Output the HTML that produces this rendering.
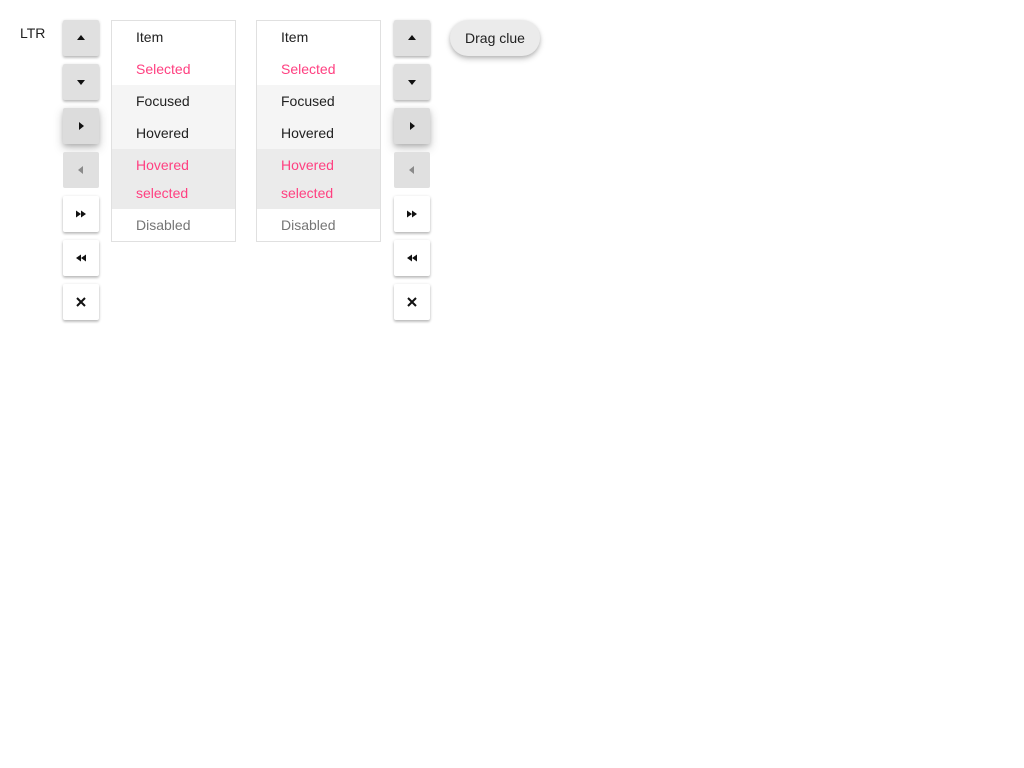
<!DOCTYPE html>
<html><head><meta charset="utf-8"><style>
body{margin:0;width:1024px;height:768px;background:#fff;font-family:"Liberation Sans",sans-serif;font-size:14px;color:#212121;position:relative;overflow:hidden}
.a{position:absolute}
.b{position:absolute;width:36px;height:36px;border-radius:2px;background:#e0e0e0;box-shadow:0 2px 2px rgba(0,0,0,.14),0 1px 3px rgba(0,0,0,.2);display:flex;align-items:center;justify-content:center}
.b.h{background:#dcdcdc;box-shadow:0 4px 10px rgba(0,0,0,.22),0 2px 4px rgba(0,0,0,.15)}
.b.d{background:#e0e0e0;box-shadow:none}
.b.w{background:#fff}
.l{position:absolute;top:20px;width:123px;height:220px;border:1px solid #e0e0e0;background:#fff}
.r{height:32px;line-height:32px;padding-left:24px}
.p{color:#ff4081}
.f{background:#f5f5f5}
.hs{background:#ebebeb;height:60px;line-height:28px;padding-top:2px;box-sizing:border-box}
.dis{color:#757575}
.chip{position:absolute;left:450px;top:20px;width:90px;height:36px;border-radius:18px;background:#ebebeb;box-shadow:0 3px 6px rgba(0,0,0,.22),0 1px 3px rgba(0,0,0,.12);line-height:36px;text-align:center;color:#212121}
</style></head><body>
<div class="a" style="left:20px;top:25px">LTR</div>

<div id="c1"></div>
<script>
function col(x){
 const ic=[
 '<path d="M-4 2L0 -3L4 2Z"/>',
 '<path d="M-4 -2L0 3L4 -2Z"/>',
 '<path d="M-2 -4L3 0L-2 4Z"/>',
 '<path d="M2 -4L-3 0L2 4Z" fill="#8a8a8a"/>',
 '<path d="M-5 -3.5L0 0L-5 3.5ZM0 -3.5L5 0L0 3.5Z"/>',
 '<path d="M5 -3.5L0 0L5 3.5ZM0 -3.5L-5 0L0 3.5Z"/>',
 '<path d="M-4 -4L4 4M4 -4L-4 4" stroke="#111" stroke-width="2" fill="none"/>'];
 const cl=['','','h','d','w','w','w'];
 let s='';
 for(let i=0;i<7;i++){s+='<div class="b '+cl[i]+'" style="left:'+x+'px;top:'+(20+i*44)+'px"><svg width="12" height="12" viewBox="-6 -6 12 12" fill="#111">'+ic[i]+'</svg></div>';}
 return s;
}
function list(x){
 return '<div class="l" style="left:'+x+'px"><div class="r">Item</div><div class="r p">Selected</div><div class="r f">Focused</div><div class="r f">Hovered</div><div class="r p hs">Hovered<br>selected</div><div class="r dis">Disabled</div></div>';
}
document.getElementById('c1').innerHTML=col(63)+col(394)+list(111)+list(256);
</script>
<div class="chip">Drag clue</div>
</body></html>
